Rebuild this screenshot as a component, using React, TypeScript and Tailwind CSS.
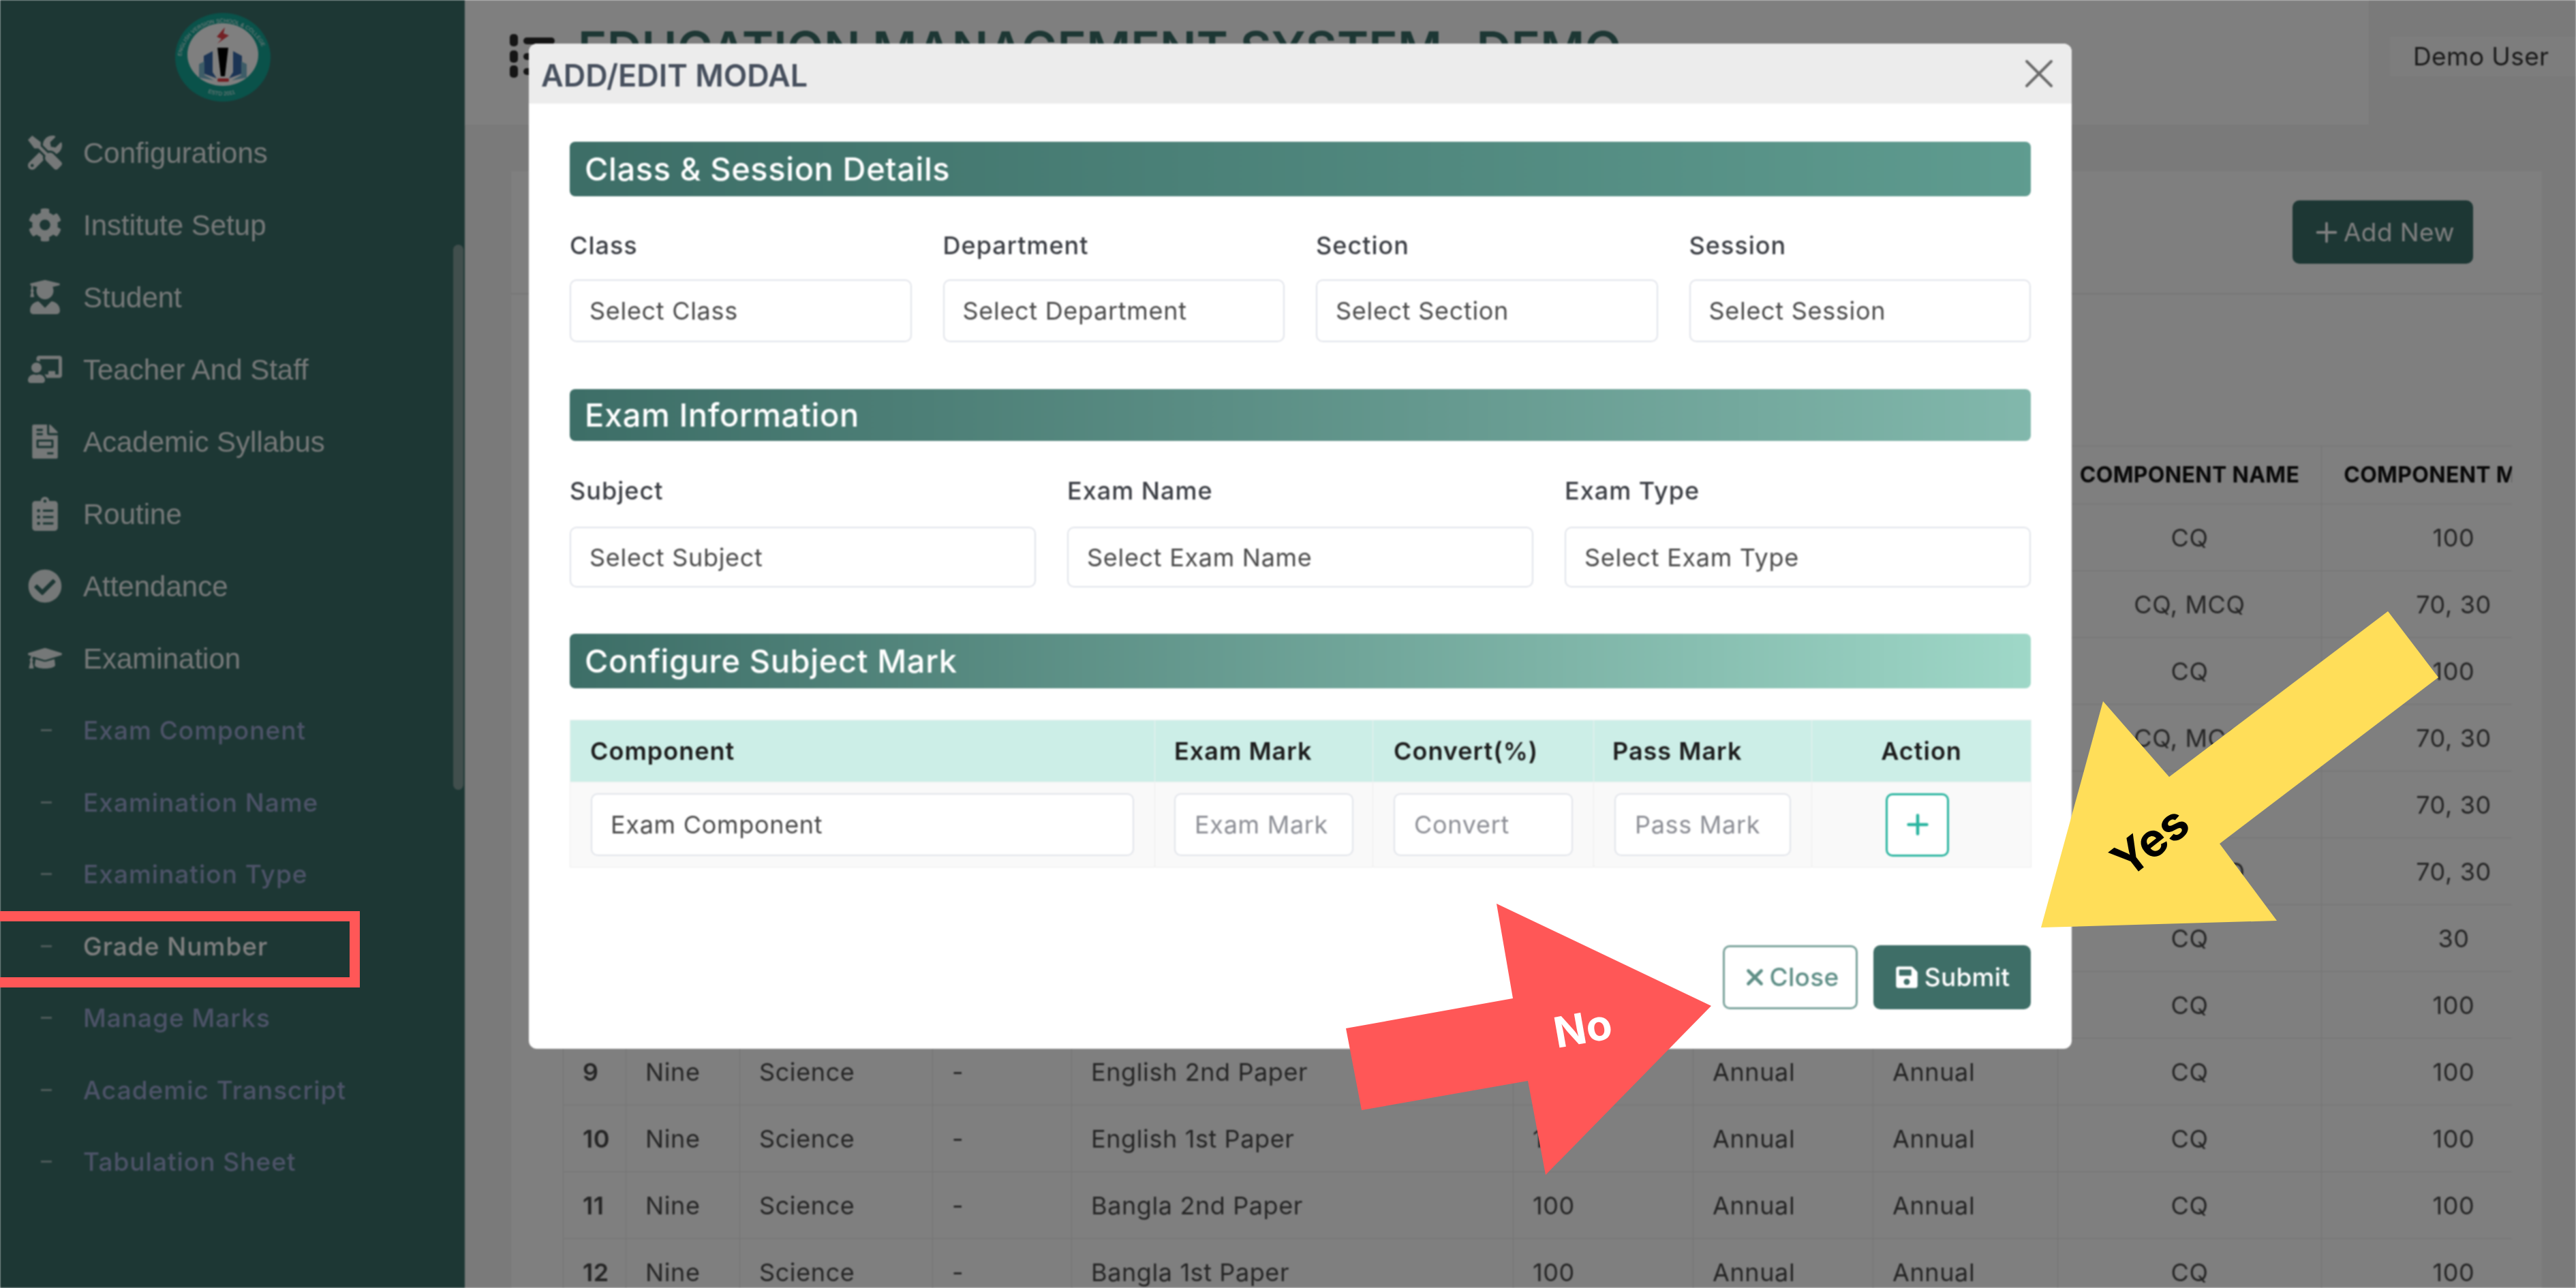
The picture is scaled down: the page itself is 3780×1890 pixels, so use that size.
import {
  FaCheckCircle,
  FaChalkboardTeacher,
  FaClipboardList,
  FaCog,
  FaFileInvoice,
  FaGraduationCap,
  FaSave,
  FaTools,
  FaUserGraduate,
} from "react-icons/fa";
import { Plus, X } from "lucide-react";

const MAIN_MENU = [
  { label: "Configurations", icon: FaTools },
  { label: "Institute Setup", icon: FaCog },
  { label: "Student", icon: FaUserGraduate },
  { label: "Teacher And Staff", icon: FaChalkboardTeacher },
  { label: "Academic Syllabus", icon: FaFileInvoice },
  { label: "Routine", icon: FaClipboardList },
  { label: "Attendance", icon: FaCheckCircle },
  { label: "Examination", icon: FaGraduationCap },
];

const SUB_MENU = [
  "Exam Component",
  "Examination Name",
  "Examination Type",
  "Grade Number",
  "Manage Marks",
  "Academic Transcript",
  "Tabulation Sheet",
];

const ROWS = [
  ["1", "Nine", "Science", "-", "Physics", "100", "Annual", "Annual", "CQ", "100"],
  ["2", "Nine", "Science", "-", "Chemistry", "100", "Annual", "Annual", "CQ, MCQ", "70, 30"],
  ["3", "Nine", "Science", "-", "Biology", "100", "Annual", "Annual", "CQ", "100"],
  ["4", "Nine", "Science", "-", "Higher Math", "100", "Annual", "Annual", "CQ, MCQ", "70, 30"],
  ["5", "Nine", "Science", "-", "General Math", "100", "Annual", "Annual", "CQ, MCQ", "70, 30"],
  ["6", "Nine", "Science", "-", "ICT", "100", "Annual", "Annual", "CQ, MCQ", "70, 30"],
  ["7", "Nine", "Science", "-", "Religion", "30", "Annual", "Annual", "CQ", "30"],
  ["8", "Nine", "Science", "-", "Bangladesh Studies", "100", "Annual", "Annual", "CQ", "100"],
  ["9", "Nine", "Science", "-", "English 2nd Paper", "100", "Annual", "Annual", "CQ", "100"],
  ["10", "Nine", "Science", "-", "English 1st Paper", "100", "Annual", "Annual", "CQ", "100"],
  ["11", "Nine", "Science", "-", "Bangla 2nd Paper", "100", "Annual", "Annual", "CQ", "100"],
  ["12", "Nine", "Science", "-", "Bangla 1st Paper", "100", "Annual", "Annual", "CQ", "100"],
];

const HEADERS = [
  "#",
  "CLASS",
  "DEPARTMENT",
  "SECTION",
  "SUBJECT",
  "EXAM MARK",
  "EXAM NAME",
  "EXAM TYPE",
  "COMPONENT NAME",
  "COMPONENT MARK",
];

function Logo() {
  return (
    <svg width="142" height="132" viewBox="0 0 142 132">
      <defs>
        <path id="ring-top" d="M 10 70 A 61 55 0 0 1 132 70" />
        <path id="ring-bottom" d="M 38 112 A 50 40 0 0 0 104 112" />
      </defs>
      <ellipse cx="71" cy="66" rx="70" ry="65" fill="#14a595" />
      <ellipse cx="71" cy="62" rx="52" ry="46" fill="#ffffff" />
      <text fontSize="8" fill="#ffffff" fontFamily="Liberation Sans, sans-serif">
        <textPath href="#ring-top" startOffset="3%">
          ENGLISH VERSION SCHOOL &amp; COLLEGE
        </textPath>
      </text>
      <text fontSize="8" fill="#ffffff" fontFamily="Liberation Sans, sans-serif">
        <textPath href="#ring-bottom" startOffset="18%">
          ESTD 2011
        </textPath>
      </text>
      <path d="M74 22 L62 36 L69 39 L63 46 L80 34 L72 31 Z" fill="#e8434a" />
      <path d="M63 52 H79 L74 94 H68 Z" fill="#000000" />
      <rect x="63" y="97" width="17" height="5" rx="2" fill="#e8434a" />
      <path d="M43 64 V90 L62 97 L56 88 V57 Z" fill="#3668a8" />
      <path d="M99 64 V90 L80 97 L86 88 V57 Z" fill="#3668a8" />
      <path d="M36 76 V96 L58 100 L44 92 V72 Z" fill="#7ab8cf" />
      <path d="M106 76 V96 L84 100 L98 92 V72 Z" fill="#7ab8cf" />
    </svg>
  );
}

function SelectBox({ text }: { text: string }) {
  return (
    <div className="flex h-full items-center rounded-[10px] border-2 border-[#e1e4ea] bg-white pl-[27px] text-[36px] tracking-[0.7px] text-[#4b4b4b]">
      {text}
    </div>
  );
}

function SectionBar({ title, to, height }: { title: string; to: string; height: string }) {
  return (
    <div className={`flex items-center rounded-[8px] bg-gradient-to-r from-[#3d6e67] ${to} ${height} pl-[22px] text-[47px] font-medium tracking-[0.6px] text-white`}>
      {title}
    </div>
  );
}

function MarkInput({ placeholder }: { placeholder: string }) {
  return (
    <input
      placeholder={placeholder}
      className="h-[92px] w-full rounded-[10px] border-2 border-[#e1e4ea] bg-white pl-[28px] text-[36px] tracking-[0.7px] placeholder:text-[#8d8f96]"
    />
  );
}

export default function App() {
  return (
    <div className="relative h-[1890px] w-[3780px] overflow-hidden bg-[#f4f4f4] font-['Inter',sans-serif]">
      <div className="relative flex h-full blur-[0.8px]">
        {/* sidebar */}
        <aside className="relative h-full w-[682px] shrink-0 bg-[#3a6e68] font-['Liberation_Sans',sans-serif]">
          <div className="h-[171px] pt-[18px] pl-[256px]">
            <Logo />
          </div>
          <ul>
            {MAIN_MENU.map((item) => (
              <li key={item.label} className="flex h-[106px] items-center text-[42px] text-white/90">
                <span className="flex w-[122px] shrink-0 pl-[41px]">
                  <item.icon size={50} />
                </span>
                {item.label}
              </li>
            ))}
            {SUB_MENU.map((label) => (
              <li
                key={label}
                className={`flex h-[105.5px] items-center font-['Inter',sans-serif] text-[37px] font-medium tracking-[1px] ${
                  label === "Grade Number" ? "text-white" : "text-[#9ba7d0]"
                }`}
              >
                <span className="flex w-[122px] shrink-0 pl-[60px]">
                  <span className="h-[3px] w-[16px] bg-white/50" />
                </span>
                {label}
              </li>
            ))}
          </ul>
          <div className="absolute top-[359px] right-[2px] h-[800px] w-[15px] rounded-full bg-[#829e9a]" />
        </aside>

        {/* page behind the modal */}
        <main className="min-w-0 flex-1">
          <header className="flex h-[183px]">
            <div className="flex w-[2794px] gap-[28px] bg-white pt-[30px] pl-[66px]">
              <svg width="72" height="72" viewBox="0 0 72 72" className="mt-[20px] shrink-0" fill="#2b2b2b">
                <rect x="0" y="0" width="12" height="18" rx="5" />
                <rect x="0" y="24" width="12" height="18" rx="5" />
                <rect x="0" y="46" width="12" height="18" rx="5" />
                <rect x="20" y="5" width="46" height="10" rx="5" />
                <rect x="20" y="28" width="46" height="10" rx="5" />
                <rect x="20" y="50" width="46" height="10" rx="5" />
              </svg>
              <h1 className="text-[70.5px] leading-[84px] font-semibold whitespace-nowrap text-[#3a6e68]">
                EDUCATION MANAGEMENT SYSTEM- DEMO
              </h1>
            </div>
            <div className="ml-[31px] h-[58px] w-[273px] translate-y-[54px] bg-white/60 pl-[34px] text-[37px] leading-[58px] tracking-[0.4px] text-[#333]">
              Demo User
            </div>
          </header>

          <section className="mt-[68px] ml-[68px] h-[1700px] w-[2980px] bg-white">
            <div className="flex h-[181px] items-center justify-end border-b-2 border-[#ececec] pr-[101px]">
              <button className="flex h-[93px] w-[265px] items-center justify-center gap-[2px] rounded-[10px] bg-[#3a6e68] text-[37px] tracking-[0.4px] text-white">
                <Plus size={46} />
                Add New
              </button>
            </div>
            <div className="mt-[222px] ml-[76px] w-[2860px] overflow-hidden">
              <table className="w-[2968px] table-fixed border-collapse text-[36px] tracking-[0.6px] text-[#4a4a4a]">
                <colgroup>
                  <col className="w-[92px]" />
                  <col className="w-[167px]" />
                  <col className="w-[283px]" />
                  <col className="w-[204px]" />
                  <col className="w-[648px]" />
                  <col className="w-[264px]" />
                  <col className="w-[264px]" />
                  <col className="w-[271px]" />
                  <col className="w-[387px]" />
                  <col className="w-[388px]" />
                </colgroup>
                <thead>
                  <tr className="h-[85px]">
                    {HEADERS.map((h, i) => (
                      <th
                        key={h}
                        className={`overflow-hidden border border-[#e8e8e8] text-[32px] font-bold tracking-[0.3px] whitespace-nowrap text-[#111] ${
                          i > 7 ? "text-center" : "pl-[28px] text-left"
                        }`}
                      >
                        {h}
                      </th>
                    ))}
                  </tr>
                </thead>
                <tbody>
                  {ROWS.map((row) => (
                    <tr key={row[0]} className="h-[98px]">
                      {row.map((cell, i) => (
                        <td
                          key={i}
                          className={`border border-[#e8e8e8] ${i > 7 ? "text-center" : "pl-[28px]"} ${
                            i === 0 ? "font-semibold" : ""
                          }`}
                        >
                          {cell}
                        </td>
                      ))}
                    </tr>
                  ))}
                </tbody>
              </table>
            </div>
          </section>
        </main>

        {/* modal */}
        <div className="absolute inset-0 bg-black/50">
          <div className="mt-[64px] ml-[776px] h-[1475px] w-[2264px] overflow-hidden rounded-[12px] bg-white">
            <div className="flex h-[88px] items-center justify-between bg-[#ececec] pr-[12px] pl-[18px]">
              <h2 className="mt-[6px] text-[45px] font-semibold text-[#47505e]">ADD/EDIT MODAL</h2>
              <X size={72} strokeWidth={1.3} className="text-[#6a6a6a]" />
            </div>

            <div className="px-[60px] pt-[56px]">
              <SectionBar title="Class & Session Details" to="to-[#5f9c90]" height="h-[80px]" />
              <div className="mt-[50px] grid grid-cols-4 gap-x-[46px]">
                {[
                  ["Class", "Select Class"],
                  ["Department", "Select Department"],
                  ["Section", "Select Section"],
                  ["Session", "Select Session"],
                ].map(([label, text]) => (
                  <div key={label}>
                    <div className="h-[44px] text-[36px] leading-[44px] font-medium tracking-[1px] text-[#3c3f45]">
                      {label}
                    </div>
                    <div className="mt-[28px] h-[92px]">
                      <SelectBox text={text} />
                    </div>
                  </div>
                ))}
              </div>

              <div className="mt-[69px]">
                <SectionBar title="Exam Information" to="to-[#82b8ac]" height="h-[76px]" />
              </div>
              <div className="mt-[51px] grid grid-cols-3 gap-x-[46px]">
                {[
                  ["Subject", "Select Subject"],
                  ["Exam Name", "Select Exam Name"],
                  ["Exam Type", "Select Exam Type"],
                ].map(([label, text]) => (
                  <div key={label}>
                    <div className="h-[44px] text-[36px] leading-[44px] font-medium tracking-[1px] text-[#3c3f45]">
                      {label}
                    </div>
                    <div className="mt-[31px] h-[89px]">
                      <SelectBox text={text} />
                    </div>
                  </div>
                ))}
              </div>

              <div className="mt-[68px]">
                <SectionBar title="Configure Subject Mark" to="to-[#9fd8c8]" height="h-[80px]" />
              </div>
              <table className="mt-[46px] w-full table-fixed border-collapse">
                <colgroup>
                  <col className="w-[858px]" />
                  <col className="w-[320px]" />
                  <col className="w-[324px]" />
                  <col className="w-[320px]" />
                  <col className="w-[322px]" />
                </colgroup>
                <thead>
                  <tr className="h-[91px] bg-[#cceee7] text-[36px] tracking-[1px] text-[#1d1d1d]">
                    <th className="border border-[#eef1f1] pl-[29px] text-left font-semibold">Component</th>
                    <th className="border border-[#eef1f1] pl-[28px] text-left font-semibold">Exam Mark</th>
                    <th className="border border-[#eef1f1] pl-[30px] text-left font-semibold">Convert(%)</th>
                    <th className="border border-[#eef1f1] pl-[27px] text-left font-semibold">Pass Mark</th>
                    <th className="border border-[#eef1f1] text-center font-semibold">Action</th>
                  </tr>
                </thead>
                <tbody>
                  <tr className="h-[125px] bg-[#f9f9f9]">
                    <td className="border border-[#eeeeee] px-[30px]">
                      <div className="h-[92px]">
                        <SelectBox text="Exam Component" />
                      </div>
                    </td>
                    <td className="border border-[#eeeeee] px-[28px]">
                      <MarkInput placeholder="Exam Mark" />
                    </td>
                    <td className="border border-[#eeeeee] px-[30px]">
                      <MarkInput placeholder="Convert" />
                    </td>
                    <td className="border border-[#eeeeee] px-[30px]">
                      <MarkInput placeholder="Pass Mark" />
                    </td>
                    <td className="border border-[#eeeeee]">
                      <button className="ml-[108px] flex h-[93px] w-[93px] items-center justify-center rounded-[10px] border-[3px] border-[#2bb5a0] bg-white text-[#2bb5a0]">
                        <Plus size={46} strokeWidth={2.4} />
                      </button>
                    </td>
                  </tr>
                </tbody>
              </table>

              <div className="mt-[114px] flex justify-end gap-[23px]">
                <button className="flex h-[94px] w-[198px] items-center justify-center gap-[3px] rounded-[10px] border-[3px] border-[#7ba39c] text-[37px] font-medium tracking-[0.3px] text-[#5f8f87]">
                  <X size={38} strokeWidth={3} />
                  Close
                </button>
                <button className="flex h-[94px] w-[231px] items-center justify-center gap-[8px] rounded-[10px] bg-[#3e6e67] text-[37px] font-medium tracking-[0.3px] text-white">
                  <FaSave size={36} />
                  Submit
                </button>
              </div>
            </div>
          </div>
        </div>
      </div>

      {/* annotations on top of the screenshot */}
      <div className="absolute top-[1337px] left-0 h-[112px] w-[528px] border-y-[15px] border-r-[15px] border-[#ff5757]" />
      <svg className="pointer-events-none absolute inset-0" width="3780" height="1890" viewBox="0 0 3780 1890">
        <polygon
          fill="#ffde59"
          points="3086,1029 3183,1140 3504,897 3578,994 3257,1238 3341,1351 2995,1361"
        />
        <polygon
          fill="#ff5757"
          points="2196,1326 2511,1476 2268,1724 2242,1586 1998,1629 1975,1509 2220,1465"
        />
      </svg>
      <span className="absolute top-[1473px] left-[2280px] -rotate-[10deg] text-[62px] leading-[72px] font-bold text-white">
        No
      </span>
      <span className="absolute top-[1198px] left-[3094px] -rotate-[38deg] text-[68px] leading-[72px] font-bold text-black">
        Yes
      </span>
    </div>
  );
}
